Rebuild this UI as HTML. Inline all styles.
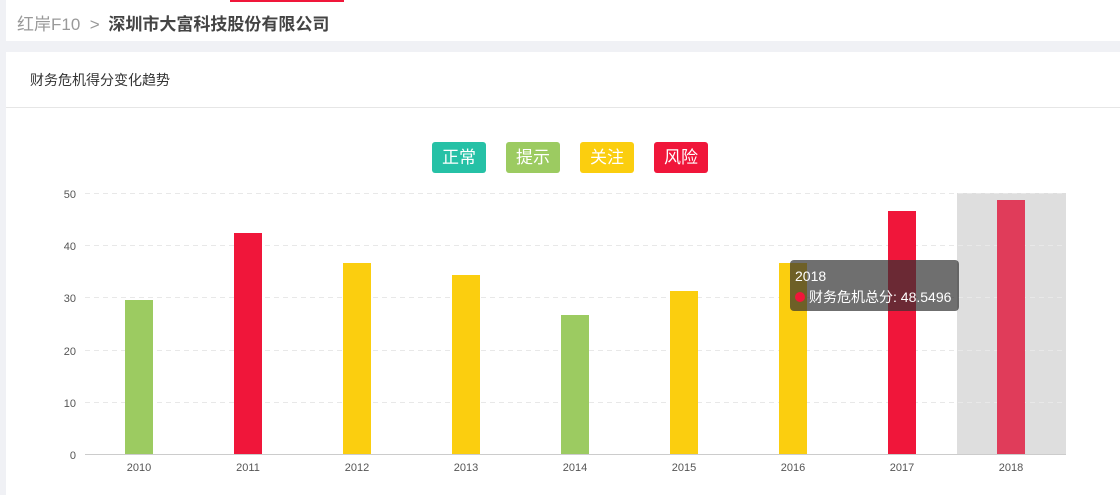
<!DOCTYPE html>
<html><head><meta charset="utf-8"><style>
body{margin:0;width:1120px;height:495px;background:#f0f1f5;font-family:"Liberation Sans","Noto Sans CJK SC",sans-serif;position:relative;overflow:hidden}
.hdr{position:absolute;left:6px;top:0;width:1114px;height:41px;background:#fff}
.red{position:absolute;left:230px;top:0;width:114px;height:2px;background:#f0163a}
.bc{position:absolute;left:11px;top:10px;font-size:17px;color:#999}
.bc b{color:#444;font-weight:bold;margin-left:4px}
.card{position:absolute;left:6px;top:52px;width:1114px;height:443px;background:#fff}
.ttl{height:55px;border-bottom:1px solid #e6e6e6;font-size:14px;color:#333;line-height:56px;padding-left:24px}
.lg{position:absolute;top:142px;height:31px;width:54px;border-radius:3px;color:#fff;font-size:17px;text-align:center;line-height:31px}
.a{position:absolute}
</style></head><body>
<div class="hdr"><div class="bc">红岸F10 &nbsp;&gt; <b>深圳市大富科技股份有限公司</b></div></div>
<div class="red"></div>
<div class="card"><div class="ttl">财务危机得分变化趋势</div></div>
<div class="lg" style="left:432px;background:#26c1a6">正常</div>
<div class="lg" style="left:506px;background:#9ccb61">提示</div>
<div class="lg" style="left:580px;background:#fbce0f">关注</div>
<div class="lg" style="left:654px;background:#f0163a">风险</div>
<svg class="a" style="left:0;top:0" width="1120" height="495" font-family="Liberation Sans" font-size="11" fill="#555">
<rect x="957" y="193" width="109" height="261" fill="#dedede"/>
<g stroke="#e8e8e8" stroke-dasharray="5,4">
<line x1="85" x2="1066" y1="193.5" y2="193.5"/><line x1="85" x2="1066" y1="245.5" y2="245.5"/><line x1="85" x2="1066" y1="297.5" y2="297.5"/><line x1="85" x2="1066" y1="350.5" y2="350.5"/><line x1="85" x2="1066" y1="402.5" y2="402.5"/>
</g>
<line x1="85" x2="1066" y1="454.5" y2="454.5" stroke="#ccc"/>
<g text-anchor="end"><text x="76" y="198">50</text><text x="76" y="250">40</text><text x="76" y="302">30</text><text x="76" y="355">20</text><text x="76" y="407">10</text><text x="76" y="459">0</text></g>
<rect x="125" y="300" width="28" height="154" fill="#9ccb61"/>
<rect x="234" y="233" width="28" height="221" fill="#f0163a"/>
<rect x="343" y="263" width="28" height="191" fill="#fbce0f"/>
<rect x="452" y="275" width="28" height="179" fill="#fbce0f"/>
<rect x="561" y="315" width="28" height="139" fill="#9ccb61"/>
<rect x="670" y="291" width="28" height="163" fill="#fbce0f"/>
<rect x="779" y="263" width="28" height="191" fill="#fbce0f"/>
<rect x="888" y="211" width="28" height="243" fill="#f0163a"/>
<rect x="997" y="200" width="28" height="254" fill="#e03c5a"/>
<g text-anchor="middle"><text x="139" y="471">2010</text><text x="248" y="471">2011</text><text x="357" y="471">2012</text><text x="466" y="471">2013</text><text x="575" y="471">2014</text><text x="684" y="471">2015</text><text x="793" y="471">2016</text><text x="902" y="471">2017</text><text x="1011" y="471">2018</text></g>
<rect x="790" y="260" width="169" height="51" rx="4" fill="rgba(50,50,50,0.7)"/>
<text x="795" y="281" fill="#fff" font-size="14">2018</text>
<circle cx="800" cy="297" r="5" fill="#f0163a"/>
<text x="809" y="302" fill="#fff" font-size="14" font-family="Liberation Sans,Noto Sans CJK SC">财务危机总分: 48.5496</text>
</svg>
</body></html>
